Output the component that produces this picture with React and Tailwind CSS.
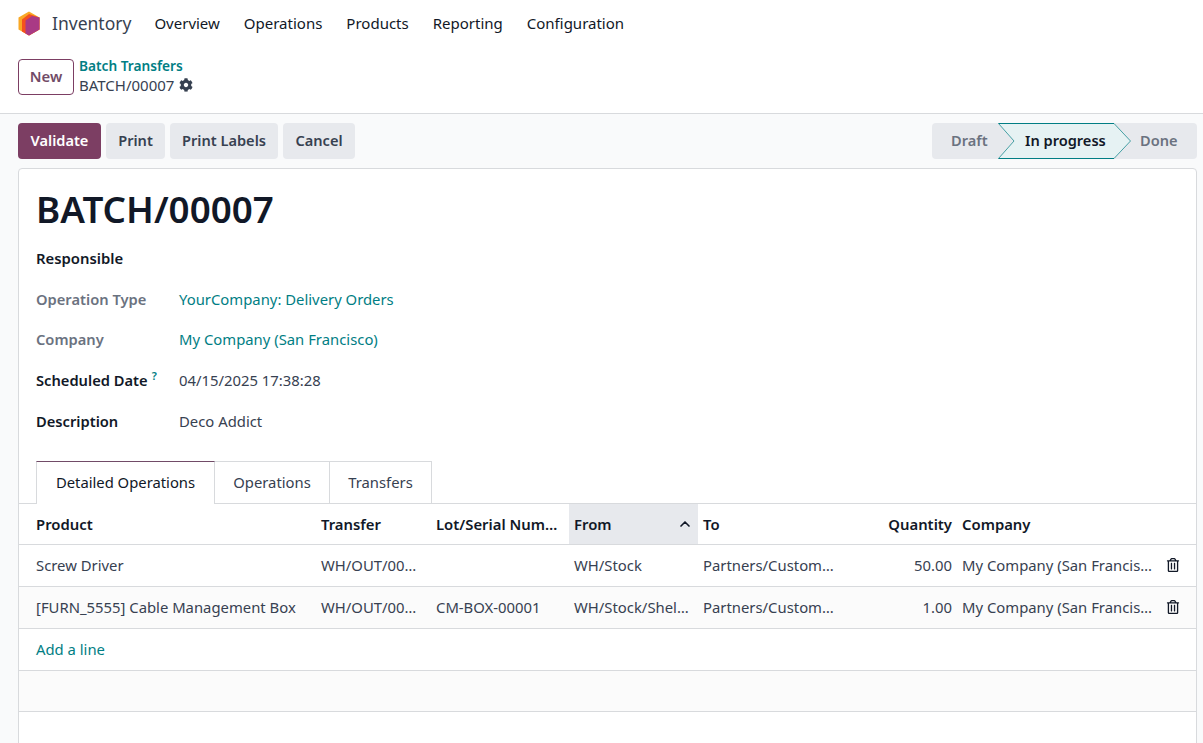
import { ChevronUp } from "lucide-react";
import { FaCog, FaRegTrashAlt } from "react-icons/fa";

const navItems = ["Overview", "Operations", "Products", "Reporting", "Configuration"];

const fields = [
  { label: "Operation Type", value: "YourCompany: Delivery Orders", link: true, muted: true, h: "h-[41px]" },
  { label: "Company", value: "My Company (San Francisco)", link: true, muted: true, h: "h-[39px]" },
  { label: "Scheduled Date", value: "04/15/2025 17:38:28", help: true, h: "h-[42px]" },
  { label: "Description", value: "Deco Addict", h: "h-[41px]" },
];

const rows = [
  { product: "Screw Driver", transfer: "WH/OUT/00016", lot: "", from: "WH/Stock", to: "Partners/Customers", qty: "50.00" },
  { product: "[FURN_5555] Cable Management Box", transfer: "WH/OUT/00017", lot: "CM-BOX-00001", from: "WH/Stock/Shelf 1", to: "Partners/Customers", qty: "1.00", alt: true },
];

function Logo() {
  return (
    <svg width="22" height="25" viewBox="0 0 22 25">
      <path d="M11 0.5 L21.5 6.5 V18.5 L11 24.5 L0.5 18.5 V6.5 Z" fill="#f9a825" />
      <path d="M4 8.5 L11 3 L21.5 6.5 V18.5 L11 24.5 L4 20.5 Z" fill="#f4511e" />
      <path d="M7.5 9.5 L14 5 L21.5 6.5 V18.5 L11 24.5 L7.5 22.5 Z" fill="#a93a85" />
    </svg>
  );
}

function Cell({ children, className = "" }) {
  return <td className={`pl-[5px] truncate ${className}`}>{children}</td>;
}

export default function App() {
  return (
    <div className="h-[743px] overflow-hidden bg-white text-[14.85px] text-[#374151] font-['Noto_Sans',sans-serif]">
      {/* Navbar */}
      <nav className="flex items-center h-[46px] pl-[18px]">
        <Logo />
        <span className="ml-[12px] text-[17.5px] text-[#374151]">Inventory</span>
        <ul className="flex ml-[23px] gap-[24px] text-[15px] text-[#111827]">
          {navItems.map((item) => (
            <li key={item}>{item}</li>
          ))}
        </ul>
      </nav>

      {/* Breadcrumb */}
      <div className="flex items-center gap-[5px] h-[68px] pl-[18px] pb-[6px] border-b border-[#d8dadd]">
        <button className="w-[56px] h-[36px] rounded border border-[#7c3e63] text-[#714b67] font-semibold">New</button>
        <div className="leading-[20px] -mt-[3px]">
          <div className="text-[13.7px] font-semibold text-[#017e84]">Batch Transfers</div>
          <div className="flex items-center gap-[5px] -mt-[1px] text-[15px]">
            BATCH/00007 <FaCog size={14} />
          </div>
        </div>
      </div>

      <div className="bg-[#f9fafb] pb-[20px]">
        {/* Action bar */}
        <div className="flex justify-between items-center h-[54px] pl-[18px] pr-[6px] pb-[1px]">
          <div className="flex gap-[5px] text-[14.6px] font-semibold">
            <button className="h-[36px] w-[83px] rounded bg-[#7c3e63] text-white">Validate</button>
            <button className="h-[36px] w-[59px] rounded bg-[#e7e9ed]">Print</button>
            <button className="h-[36px] w-[108px] rounded bg-[#e7e9ed]">Print Labels</button>
            <button className="h-[36px] w-[72px] rounded bg-[#e7e9ed]">Cancel</button>
          </div>
          <div className="relative flex items-center w-[265px] h-[36px] rounded-sm bg-[#e7e9ed] text-[14.6px] font-semibold text-[#6b7280]">
            <span className="absolute left-[19px]">Draft</span>
            <svg className="absolute left-[66px] top-0" width="134" height="36" viewBox="0 0 134 36">
              <path d="M0.5 0.5 H116 L132.5 18 L116 35.5 H0.5 L16 18 Z" fill="#e6f2f3" />
              <path d="M0.5 0.5 H116 M116 35.5 H0.5" stroke="#017e84" strokeWidth="1" fill="none" />
              <path d="M0.5 0.5 L16 18 L0.5 35.5 M116 0.5 L132.5 18 L116 35.5" stroke="#017e84" strokeWidth="0.7" fill="none" />
            </svg>
            <span className="absolute left-[93px] text-[#111827]">In progress</span>
            <span className="absolute left-[208px]">Done</span>
          </div>
        </div>

        {/* Sheet */}
        <div className="ml-[18px] mr-[6px] h-[600px] bg-white border border-[#d8dadd] rounded-t">
          <h1 className="pl-[17px] pt-[15px] h-[69px] text-[36.8px] leading-[50px] font-semibold text-[#111827]">BATCH/00007</h1>
          <div className="pl-[17px] h-[41px] flex items-center font-semibold text-[#111827]">Responsible</div>
          {fields.map((f) => (
            <div key={f.label} className={`flex items-center pl-[17px] ${f.h}`}>
              <div className={`w-[143px] text-[14.7px] font-semibold ${f.muted ? "text-[#6b7280]" : "text-[#111827]"}`}>
                {f.label}
                {f.help && <sup className="ml-[4px] text-[#017e84]">?</sup>}
              </div>
              <div className={f.link ? "text-[#017e84]" : ""}>{f.value}</div>
            </div>
          ))}

          {/* Tabs */}
          <div className="flex pl-[17px] mt-[19px] h-[43px] border-b border-[#d8dadd] text-[14.8px]">
            <div className="h-[43px] w-[179px] pb-[2px] flex items-center justify-center bg-white border-x border-[#d8dadd] border-t border-t-[#714b67] text-[#111827]">Detailed Operations</div>
            <div className="h-[42px] w-[115px] flex items-center justify-center border-t border-r border-[#d8dadd]">Operations</div>
            <div className="h-[42px] w-[102px] flex items-center justify-center border-t border-r border-[#d8dadd]">Transfers</div>
          </div>

          {/* Lines */}
          <table className="w-full table-fixed">
            <colgroup>
              <col className="w-[297px]" />
              <col className="w-[115px]" />
              <col className="w-[138px]" />
              <col className="w-[129px]" />
              <col className="w-[139px]" />
              <col className="w-[120px]" />
              <col className="w-[203px]" />
              <col />
            </colgroup>
            <thead>
              <tr className="h-[40px] border-b border-[#d8dadd] font-semibold text-[#111827] text-left">
                <th className="pl-[17px] font-semibold">Product</th>
                <th className="pl-[5px] font-semibold">Transfer</th>
                <th className="pl-[5px] pr-[10px] font-semibold truncate">Lot/Serial Number</th>
                <th className="px-[5px] font-semibold bg-[#e7e9ed]">
                  <div className="flex items-center justify-between">
                    From <ChevronUp size={16} strokeWidth={2.5} />
                  </div>
                </th>
                <th className="px-[5px] font-semibold">To</th>
                <th className="px-[5px] font-semibold text-right">Quantity</th>
                <th className="px-[5px] font-semibold">Company</th>
                <th />
              </tr>
            </thead>
            <tbody>
              {rows.map((r) => (
                <tr key={r.product} className={`h-[42px] border-b border-[#d8dadd] ${r.alt ? "bg-[#fbfbfb]" : ""}`}>
                  <td className="pl-[17px] truncate">{r.product}</td>
                  <Cell className="pr-[8px]">{r.transfer}</Cell>
                  <Cell className="pr-[10px]">{r.lot}</Cell>
                  <Cell className="pr-[5px]">{r.from}</Cell>
                  <Cell className="pr-[2px]">{r.to}</Cell>
                  <Cell className="pr-[5px] text-right">{r.qty}</Cell>
                  <Cell className="pr-[5px]">My Company (San Francisco)</Cell>
                  <td className="pl-[6px]"><FaRegTrashAlt size={14} className="text-[#111827]" /></td>
                </tr>
              ))}
              <tr className="h-[42px] border-b border-[#d8dadd]">
                <td colSpan={8} className="pl-[17px] text-[#017e84]">Add a line</td>
              </tr>
              <tr className="h-[41px] border-b border-[#d8dadd] bg-[#fbfbfb]">
                <td colSpan={8} />
              </tr>
            </tbody>
          </table>
        </div>
      </div>
    </div>
  );
}
